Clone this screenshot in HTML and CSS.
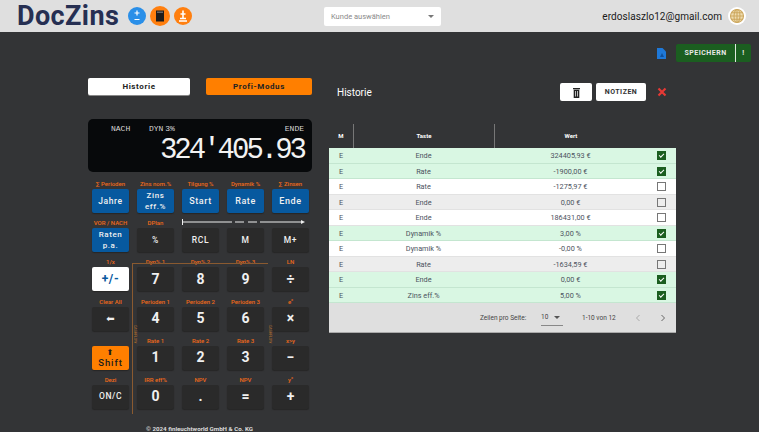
FILE: index.html
```html
<!DOCTYPE html>
<html lang="de">
<head>
    <meta charset="UTF-8">
    <title>DocZins</title>
    <link rel="stylesheet" href="styles.css">
</head>
<body>

<header class="topbar">
    <div class="logo">DocZins</div>
    <span class="round blue-round">
        <svg width="18" height="18" viewBox="0 0 18 18"><path d="M9 3.5v5M6.5 6h5M6.5 12.5h5" stroke="#fff" stroke-width="1.2" fill="none"/></svg>
    </span>
    <span class="round orange-round big">
        <svg width="20" height="20" viewBox="0 0 20 20"><rect x="6" y="4.5" width="8" height="11" fill="#1c1c1c"/><rect x="7" y="5.5" width="6" height="1.5" fill="#666"/></svg>
    </span>
    <span class="round orange-round">
        <svg width="18" height="18" viewBox="0 0 18 18"><path d="M9 3.5v8M6.5 7h5M6 11.5h6M5 14h8" stroke="#fff" stroke-width="1.6" fill="none"/></svg>
    </span>
    <div class="select">
        <span>Kunde auswählen</span>
        <i class="caret"></i>
    </div>
    <div class="user">erdoslaszlo12@gmail.com</div>
    <span class="globe">
        <svg width="18" height="18" viewBox="0 0 18 18">
            <circle cx="9" cy="9" r="9" fill="#fff"/>
            <g fill="none" stroke="#cda85f" stroke-width="1.1">
                <circle cx="9" cy="9" r="6.5" fill="#eedcb0"/>
                <ellipse cx="9" cy="9" rx="3" ry="6.5"/>
                <path d="M9 2.5v13M2.5 9h13M3.5 5.7h11M3.5 12.3h11"/>
            </g>
        </svg>
    </span>
</header>

<div class="toolbar">
    <svg class="doc-icon" width="9" height="11" viewBox="0 0 9 11"><path d="M0 0h5.5L9 3.5V11H0z" fill="#1e78d8"/><path d="M5 5l-2 4h4z" fill="#0f4f9a"/></svg>
    <div class="save-btn">
        <span class="save-main">SPEICHERN</span>
        <span class="save-more">!</span>
    </div>
</div>

<main class="main">
    <section class="calc">
        <div class="tabs">
            <div class="tab tab-white">Historie</div>
            <div class="tab tab-orange">Profi-Modus</div>
        </div>

        <div class="display">
            <div class="display-top">
                <span class="d-nach">NACH</span>
                <span class="d-dyn">DYN 3%</span>
                <span class="d-ende">ENDE</span>
            </div>
            <div class="display-num">324'405.93</div>
        </div>

        <div class="keys">
            <div class="cell"><span class="lbl">∑ Perioden</span><button class="key k-blue small">Jahre</button></div>
            <div class="cell"><span class="lbl">Zins nom.%</span><button class="key k-blue two">Zins<br>eff.%</button></div>
            <div class="cell"><span class="lbl">Tilgung %</span><button class="key k-blue">Start</button></div>
            <div class="cell"><span class="lbl">Dynamik %</span><button class="key k-blue">Rate</button></div>
            <div class="cell"><span class="lbl">∑ Zinsen</span><button class="key k-blue">Ende</button></div>

            <div class="cell"><span class="lbl">VOR / NACH</span><button class="key k-blue two">Raten<br>p.a.</button></div>
            <div class="cell"><span class="lbl">DPlan</span><button class="key small">%</button></div>
            <div class="cell"><span class="lbl"></span><button class="key small">RCL</button></div>
            <div class="cell"><span class="lbl"></span><button class="key small">M</button></div>
            <div class="cell"><span class="lbl"></span><button class="key small">M+</button></div>

            <div class="cell"><span class="lbl">1/x</span><button class="key k-white">+/-</button></div>
            <div class="cell"><span class="lbl">Dyn% 1</span><button class="key num">7</button></div>
            <div class="cell"><span class="lbl">Dyn% 2</span><button class="key num">8</button></div>
            <div class="cell"><span class="lbl">Dyn% 3</span><button class="key num">9</button></div>
            <div class="cell"><span class="lbl">LN</span><button class="key num">÷</button></div>

            <div class="cell"><span class="lbl">Clear All</span><button class="key arrow">⬅</button></div>
            <div class="cell"><span class="lbl">Perioden 1</span><button class="key num">4</button></div>
            <div class="cell"><span class="lbl">Perioden 2</span><button class="key num">5</button></div>
            <div class="cell"><span class="lbl">Perioden 3</span><button class="key num">6</button></div>
            <div class="cell"><span class="lbl">e<sup>x</sup></span><button class="key num">×</button></div>

            <div class="cell"><span class="lbl"></span><button class="key k-orange"><b>⬆</b>Shift</button></div>
            <div class="cell"><span class="lbl">Rate 1</span><button class="key num">1</button></div>
            <div class="cell"><span class="lbl">Rate 2</span><button class="key num">2</button></div>
            <div class="cell"><span class="lbl">Rate 3</span><button class="key num">3</button></div>
            <div class="cell"><span class="lbl">x&gt;y</span><button class="key num">−</button></div>

            <div class="cell"><span class="lbl">Dezi</span><button class="key small">ON/C</button></div>
            <div class="cell"><span class="lbl">IRR eff%</span><button class="key num">0</button></div>
            <div class="cell"><span class="lbl">NPV</span><button class="key num">.</button></div>
            <div class="cell"><span class="lbl">NPV</span><button class="key num">=</button></div>
            <div class="cell"><span class="lbl">y<sup>x</sup></span><button class="key num">+</button></div>

            <svg class="arrow-line" width="124" height="7" viewBox="0 0 124 7">
                <path d="M.5 0v6" stroke="#eee" fill="none"/>
                <path d="M0 3h50M53 3h9M66 3h9M78 3h42" stroke="#eee" fill="none"/>
                <path d="M119 1l4 2-4 2z" fill="#eee"/>
            </svg>
            <div class="bracket"></div>
            <span class="cashflow cf-left">CASHFLOW</span>
            <span class="cashflow cf-right">CASHFLOW</span>
        </div>
        <div class="copy">© 2024 finleuchtworld GmbH &amp; Co. KG</div>
    </section>

    <section class="history">
        <div class="history-head">
            <h2>Historie</h2>
            <button class="mini-btn trash">
                <svg width="7" height="10" viewBox="0 0 7 10"><path d="M0 0h7v1.2H0zM.7 1.8h5.6V10H.7z" fill="#222"/><path d="M2.5 3v5.5M4.5 3v5.5" stroke="#fff" stroke-width=".7"/></svg>
            </button>
            <button class="mini-btn notes">NOTIZEN</button>
            <svg class="close-x" width="10" height="10" viewBox="0 0 10 10"><path d="M1.5 1.5l7 7M8.5 1.5l-7 7" stroke="#e53935" stroke-width="2.2"/></svg>
        </div>

        <div class="table">
            <div class="row head">
                <span>M</span><span>Taste</span><span>Wert</span><span></span>
            </div>
            <div class="row green"><span>E</span><span>Ende</span><span>324405,93 €</span><span><i class="box on"></i></span></div>
            <div class="row green"><span>E</span><span>Rate</span><span>-1900,00 €</span><span><i class="box on"></i></span></div>
            <div class="row white"><span>E</span><span>Rate</span><span>-1275,97 €</span><span><i class="box"></i></span></div>
            <div class="row grey"><span>E</span><span>Ende</span><span>0,00 €</span><span><i class="box"></i></span></div>
            <div class="row white"><span>E</span><span>Ende</span><span>186431,00 €</span><span><i class="box"></i></span></div>
            <div class="row green"><span>E</span><span>Dynamik %</span><span>3,00 %</span><span><i class="box on"></i></span></div>
            <div class="row white"><span>E</span><span>Dynamik %</span><span>-0,00 %</span><span><i class="box"></i></span></div>
            <div class="row grey"><span>E</span><span>Rate</span><span>-1634,59 €</span><span><i class="box"></i></span></div>
            <div class="row green"><span>E</span><span>Ende</span><span>0,00 €</span><span><i class="box on"></i></span></div>
            <div class="row green"><span>E</span><span>Zins eff.%</span><span>5,00 %</span><span><i class="box on"></i></span></div>
            <div class="pager">
                <span class="pg-label">Zeilen pro Seite:</span>
                <span class="pg-select">10<i class="caret dark"></i></span>
                <span class="pg-range">1-10 von 12</span>
                <svg class="pg-arrow" width="6" height="8" viewBox="0 0 6 8"><path d="M4.5 1L1.5 4l3 3" stroke="#aaa" fill="none"/></svg>
                <svg class="pg-arrow next" width="6" height="8" viewBox="0 0 6 8"><path d="M1.5 1l3 3-3 3" stroke="#666" fill="none"/></svg>
            </div>
        </div>
    </section>
</main>

</body>
</html>
```

FILE: styles.css
```css
html, body {
    margin: 0;
    padding: 0;
    height: 432px;
    overflow: hidden;
}
body {
    background-color: #333436;
    font-family: Roboto, "Liberation Sans", sans-serif;
    color: #fff;
}
button {
    font-family: inherit;
    border: none;
    padding: 0;
    margin: 0;
}

/* top bar */
.topbar {
    display: flex;
    align-items: center;
    height: 32px;
    background-color: #dfdfdf;
    padding-left: 17px;
    box-sizing: border-box;
}
.logo {
    width: 111px;
    font-family: Roboto, sans-serif;
    font-weight: 700;
    font-size: 27px;
    line-height: 32px;
    letter-spacing: .4px;
    color: #262f52;
}
.round {
    display: block;
    width: 18px;
    height: 18px;
    border-radius: 50%;
}
.round svg {
    display: block;
}
.round.big {
    width: 20px;
    height: 20px;
    margin: 0 4px;
}
.blue-round { background-color: #2a8fe8; }
.orange-round { background-color: #ff7f0f; }
.select {
    display: flex;
    align-items: center;
    justify-content: space-between;
    width: 117px;
    height: 19px;
    box-sizing: border-box;
    padding: 0 7px;
    margin-left: 132px;
    background-color: #fff;
    border-radius: 2px;
    font-size: 7.5px;
    color: #8a8a8a;
}
.caret {
    display: block;
    width: 0;
    height: 0;
    border-left: 3px solid transparent;
    border-right: 3px solid transparent;
    border-top: 3px solid #777;
}
.user {
    margin-left: auto;
    font-size: 10px;
    color: #1a1a1a;
    letter-spacing: .05px;
}
.globe {
    display: block;
    width: 18px;
    height: 18px;
    margin: 0 13px 0 6px;
}

/* save row */
.toolbar {
    display: flex;
    align-items: center;
    justify-content: flex-end;
    padding: 12px 8px 0 0;
    height: 18px;
}
.doc-icon {
    margin-right: 10px;
}
.save-btn {
    display: flex;
    width: 75px;
    height: 18px;
    background-color: #1b5e20;
    border-radius: 2px;
    font-size: 7px;
    font-weight: 700;
    line-height: 18px;
    letter-spacing: .5px;
    text-align: center;
    color: #e8e8e8;
}
.save-main {
    width: 59px;
    border-right: 1px solid #dfe8df;
}
.save-more {
    flex: 1;
}

/* columns */
.main {
    display: flex;
    padding: 16px 0 0 88px;
}
.calc {
    position: relative;
    width: 224px;
}
.tabs {
    display: flex;
    justify-content: space-between;
}
.tab {
    height: 17px;
    line-height: 17px;
    text-align: center;
    font-size: 8px;
    font-weight: 700;
    letter-spacing: .6px;
    color: #222;
    border-radius: 2px;
}
.tab-white {
    width: 102px;
    background-color: #fff;
    box-shadow: 0 1px 0 #888;
}
.tab-orange {
    width: 106px;
    background-color: #ff7f00;
}

/* display */
.display {
    height: 53px;
    margin-top: 24px;
    background-color: #07090b;
    border-radius: 5px;
    box-sizing: border-box;
    padding: 3px 8px 0 0;
}
.display-top {
    height: 13px;
    font-family: "Liberation Mono", monospace;
    font-size: 8px;
    line-height: 13px;
    color: #d8d8d8;
}
.d-nach { margin-left: 23px; }
.d-dyn {
    margin-left: 14px;
    word-spacing: -3px;
}
.d-ende {
    float: right;
}
.display-num {
    font-family: "Liberation Mono", monospace;
    font-size: 29px;
    line-height: 30px;
    letter-spacing: -3px;
    text-align: right;
    color: #f2f2f2;
    margin-top: 1px;
}

/* keypad */
.keys {
    position: relative;
    display: grid;
    grid-template-columns: repeat(5, 37px);
    grid-auto-rows: 35.2px;
    column-gap: 8px;
    row-gap: 4px;
    margin: 6px 0 0 4px;
}
.cell {
    display: flex;
    flex-direction: column;
}
.lbl {
    height: 11px;
    font-size: 6px;
    font-weight: 500;
    line-height: 11px;
    text-align: center;
    color: #f06a1a;
    white-space: nowrap;
}
.lbl sup {
    font-size: 4px;
    line-height: 0;
}
.key {
    display: block;
    width: 37px;
    height: 24px;
    background-color: #2a2a2a;
    color: #f0f0f0;
    border-radius: 2px;
    font-size: 9px;
    font-weight: 500;
    letter-spacing: .6px;
    line-height: 11px;
    box-shadow: 0 1px 1px #262626;
}
.key.small { font-size: 8.5px; }
.key.two { font-size: 8px; }
.key.num {
    font-size: 14px;
    font-weight: 700;
    letter-spacing: 0;
}
.key.arrow {
    font-family: "DejaVu Sans", sans-serif;
    font-size: 10px;
    letter-spacing: 0;
}
.k-blue { background-color: #07599f; }
.k-white {
    background-color: #fff;
    color: #07599f;
    font-size: 12px;
    font-weight: 700;
}
.k-orange {
    background-color: #ff7f00;
    color: #1c1c1c;
    font-size: 9.5px;
    letter-spacing: .9px;
}
.k-orange b {
    display: block;
    font-family: "DejaVu Sans", sans-serif;
    font-size: 8px;
    line-height: 9px;
}
.arrow-line {
    position: absolute;
    left: 90px;
    top: 41px;
}
.bracket {
    position: absolute;
    left: 40px;
    top: 85px;
    width: 136px;
    height: 151px;
    border-top: 1px solid #8a5a30;
    border-left: 1px solid #8a5a30;
    box-sizing: border-box;
    pointer-events: none;
}
.cashflow {
    position: absolute;
    top: 147px;
    writing-mode: vertical-rl;
    font-size: 3.5px;
    color: #b8722f;
}
.cf-left { left: 41px; }
.cf-right { left: 176px; }
.copy {
    position: absolute;
    left: 58px;
    top: 347px;
    font-size: 6.2px;
    font-weight: 700;
    line-height: 8px;
    color: #ddd;
    white-space: nowrap;
}

/* history */
.history {
    width: 347px;
    margin-left: 17px;
}
.history-head {
    display: flex;
    align-items: center;
    height: 18px;
    margin-top: 5px;
}
.history-head h2 {
    margin: 0 0 0 8px;
    width: 223px;
    font-size: 10px;
    font-weight: 400;
    color: #fff;
}
.mini-btn {
    height: 18px;
    background-color: #fff;
    border-radius: 2px;
    color: #333;
}
.trash {
    width: 32px;
    padding-top: 2px;
}
.notes {
    width: 50px;
    margin-left: 4px;
    font-size: 7px;
    font-weight: 700;
    letter-spacing: .5px;
}
.close-x {
    margin-left: 11px;
}
.table {
    margin-top: 23px;
}
.row {
    display: grid;
    grid-template-columns: 24px 141px 153px 29px;
    height: 15.55px;
    align-items: center;
    justify-items: center;
    box-sizing: border-box;
    font-size: 7.3px;
    line-height: 15px;
    color: #4c5360;
}
.row > span {
    display: block;
    width: 100%;
    text-align: center;
}
.row.head {
    height: 24px;
    color: #fff;
    font-size: 6px;
    font-weight: 700;
}
.row.head > span {
    line-height: 24px;
}
.row.head > span:nth-child(2),
.row.head > span:nth-child(3),
.row.head > span:nth-child(4) {
    border-left: 1px solid #777;
    box-sizing: border-box;
}
.green {
    background-color: #d9f7e3;
    border-bottom: 1px solid #c4e6d0;
}
.white {
    background-color: #fff;
    border-bottom: 1px solid #e2e2e2;
}
.grey {
    background-color: #ededed;
    border-bottom: 1px solid #e2e2e2;
}
.box {
    display: block;
    position: relative;
    width: 9px;
    height: 9px;
    margin: 0 auto;
    box-sizing: border-box;
    border: 1px solid #777;
    background-color: transparent;
}
.box.on {
    background-color: #1b5e20;
    border-color: #1b5e20;
}
.box.on::after {
    content: "";
    position: absolute;
    left: 1px;
    top: 0;
    width: 4px;
    height: 2px;
    border-left: 1px solid #fff;
    border-bottom: 1px solid #fff;
    transform: rotate(-45deg) translate(-1px, 1px);
}
.pager {
    display: flex;
    align-items: center;
    height: 29px;
    background-color: #dfdfdf;
    border-bottom: 1px solid #aaa;
    font-size: 6.5px;
    color: #444;
    box-sizing: content-box;
}
.pg-label {
    margin-left: 151px;
    width: 61px;
}
.pg-select {
    display: flex;
    align-items: center;
    justify-content: space-between;
    width: 22px;
    height: 17px;
    box-sizing: border-box;
    border-bottom: 1px solid #888;
    padding-right: 3px;
}
.caret.dark {
    border-top-color: #555;
}
.pg-range {
    margin-left: 19px;
    width: 53px;
}
.pg-arrow.next {
    margin-left: 19px;
}
```
